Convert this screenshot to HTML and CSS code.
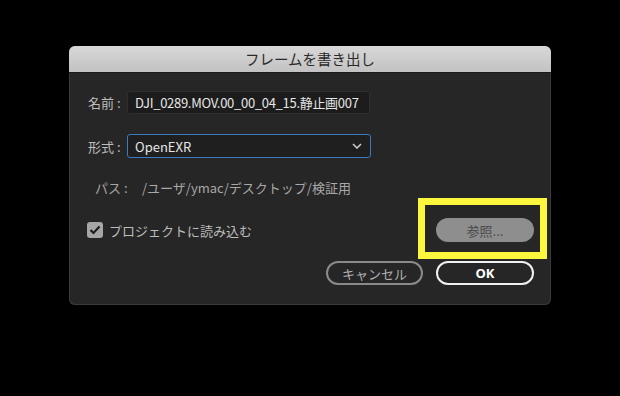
FILE: index.html
```html
<!DOCTYPE html>
<html lang="ja">
<head>
    <meta charset="UTF-8">
    <title>フレームを書き出し</title>
    <link rel="stylesheet" href="styles.css">
</head>
<body>
    <div class="dialog">
        <div class="titlebar">フレームを書き出し</div>
        <div class="content">
            <div class="row name-row">
                <span class="label">名前 :</span>
                <div class="field">DJI_0289.MOV.00_00_04_15.静止画007</div>
            </div>
            <div class="row format-row">
                <span class="label">形式 :</span>
                <div class="select">
                    <span>OpenEXR</span>
                    <svg class="chevron" width="10" height="6" viewBox="0 0 10 6"><path d="M1 1 L5 5 L9 1" fill="none" stroke="#d0d0d0" stroke-width="1.5"/></svg>
                </div>
            </div>
            <div class="row path-row">
                <span class="path-label">パス :</span>
                <span class="path">/ユーザ/ymac/デスクトップ/検証用</span>
            </div>
            <div class="row import-row">
                <label class="check">
                    <span class="box">
                        <svg width="12" height="10" viewBox="0 0 12 10"><path d="M1.5 5 L4.5 8 L10.5 1.5" fill="none" stroke="#1e1e1e" stroke-width="2.2"/></svg>
                    </span>
                    プロジェクトに読み込む
                </label>
                <div class="browse-wrap">
                    <button class="btn browse">参照...</button>
                    <div class="highlight"></div>
                </div>
            </div>
            <div class="row actions">
                <button class="btn cancel">キャンセル</button>
                <button class="btn ok">OK</button>
            </div>
        </div>
    </div>
</body>
</html>
```

FILE: styles.css
```css
body {
    margin: 0;
    background: #000;
    width: 620px;
    height: 396px;
    padding: 46px 0 0 69px;
    box-sizing: border-box;
    font-family: "Noto Sans CJK JP", "Noto Sans", sans-serif;
}
.dialog {
    width: 482px;
    height: 259px;
    background: #262626;
    border-radius: 6px;
    box-shadow: inset 0 0 0 1px #3a3a3a;
    overflow: hidden;
}
.titlebar {
    height: 26px;
    line-height: 26px;
    text-align: center;
    font-size: 14.5px;
    color: #2a2a2a;
    background: linear-gradient(#d8d8d8, #c2c2c2);
    border-bottom: 1px solid #1a1a1a;
}
.content {
    padding: 0 18px 0 19px;
}
.row {
    display: flex;
    align-items: center;
}
.label {
    font-size: 13px;
    color: #bdbdbd;
    width: 39px;
}
.name-row {
    margin-top: 18px;
}
.field {
    width: 243px;
    height: 23px;
    box-sizing: border-box;
    background: #1c1c1c;
    border: 1px solid #2e2e2e;
    border-radius: 3px;
    color: #e6e6e6;
    font-size: 13px;
    line-height: 21px;
    padding-left: 7px;
    white-space: nowrap;
    letter-spacing: -0.3px;
    overflow: hidden;
}
.format-row {
    margin-top: 20px;
}
.select {
    width: 244px;
    height: 24px;
    box-sizing: border-box;
    border: 1px solid #3c78c4;
    border-radius: 3px;
    background: #1f1f1f;
    color: #e6e6e6;
    font-size: 13px;
    display: flex;
    align-items: center;
    justify-content: space-between;
    padding: 0 7px 0 7px;
}
.chevron {
    margin-right: 1px;
}
.path-row {
    margin-top: 20px;
    font-size: 13px;
    color: #a8a8a8;
    padding-left: 7px;
}
.path-label {
    width: 47px;
}
.import-row {
    margin-top: 21px;
    justify-content: space-between;
    height: 24px;
}
.check {
    display: flex;
    align-items: center;
    font-size: 13px;
    color: #bdbdbd;
    gap: 6px;
    margin-left: -1px;
}
.box {
    width: 16px;
    height: 16px;
    border-radius: 3px;
    background: #a6a6a6;
    display: flex;
    align-items: center;
    justify-content: center;
}
.browse-wrap {
    position: relative;
    margin-right: -1px;
}
.btn {
    width: 98px;
    height: 24px;
    box-sizing: border-box;
    border-radius: 12px;
    font-family: "Noto Sans CJK JP", "Noto Sans", sans-serif;
    font-size: 13px;
    padding: 0;
    cursor: pointer;
}
.browse {
    display: block;
    background: #8e8e8e;
    border: none;
    color: #4a4a4a;
}
.highlight {
    position: absolute;
    left: -18px;
    top: -20px;
    width: 129px;
    height: 61px;
    box-sizing: border-box;
    border: 7px solid #fbf73c;
}
.actions {
    margin-top: 19px;
    justify-content: flex-end;
    gap: 13px;
}
.cancel {
    background: transparent;
    border: 2px solid #8a8a8a;
    color: #b0b0b0;
    width: 97px;
}
.ok {
    background: transparent;
    border: 2px solid #f0f0f0;
    color: #ffffff;
    font-weight: bold;
    font-family: "Open Sans", "Noto Sans CJK JP", sans-serif;
    margin-right: -1px;
}
```
